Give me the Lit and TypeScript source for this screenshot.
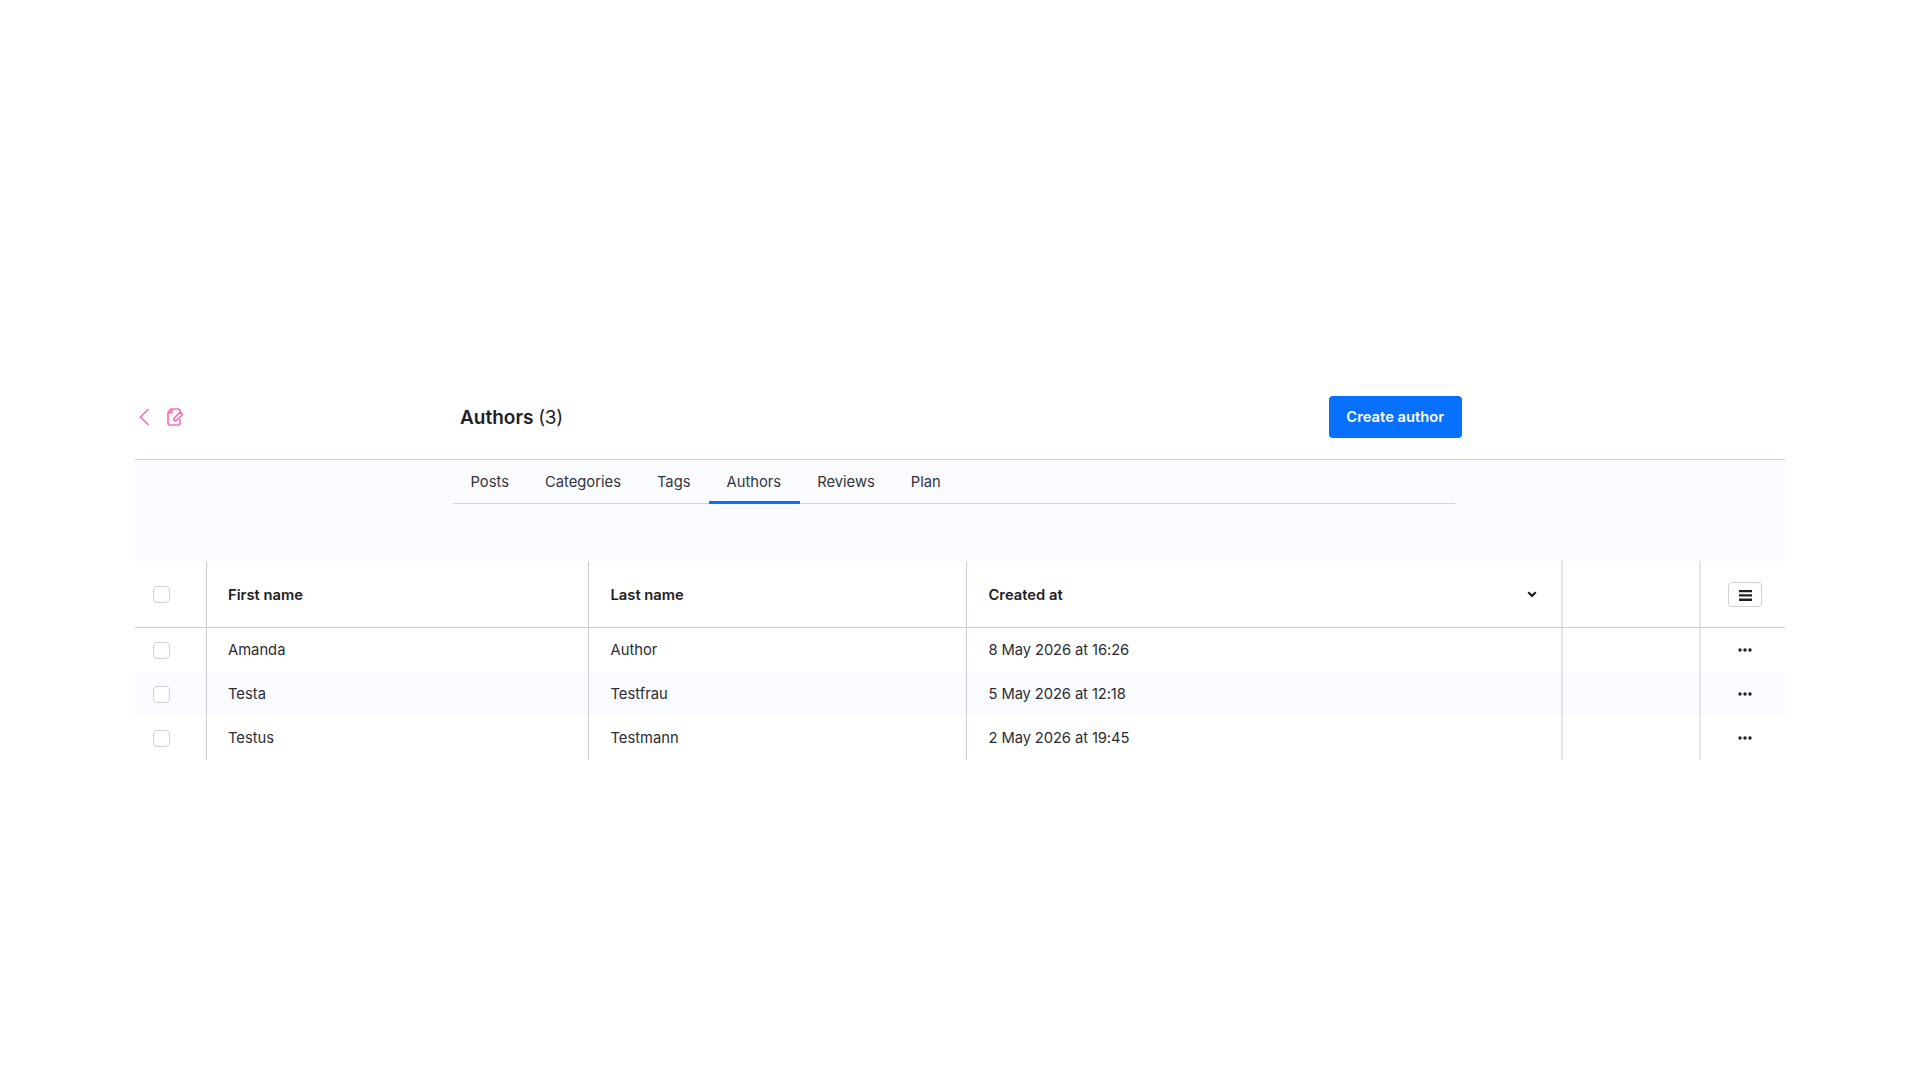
import { LitElement, html, css } from "lit";
import { customElement } from "lit/decorators.js";

interface Author {
  firstName: string;
  lastName: string;
  createdAt: string;
}

@customElement("app-root")
export class AppRoot extends LitElement {

  static styles = css`
    :host {
      display: block;
      box-sizing: border-box;
      width: 1920px;
      height: 1080px;
      padding: 375px 135px 0;
      background: #fff;
      color: #1f2026;
      font-family: Inter, "Liberation Sans", sans-serif;
      font-size: 14.75px;
      line-height: 20px;
    }

    svg {
      display: block;
    }

    button {
      padding: 0;
      border: 0;
      background: none;
      color: inherit;
      font: inherit;
    }

    .header {
      display: grid;
      grid-template-columns: 325px 868.5px 1fr;
      align-items: center;
      height: 84px;
      border-bottom: 1px solid #d1d2d8;
    }

    .nav {
      display: flex;
      align-items: center;
      gap: 16px;
      padding-left: 4px;
      color: #ff68b4;
    }

    .title {
      margin: 0;
      padding-top: 2px;
      font-size: 19px;
      font-weight: 600;
      line-height: 24px;
    }

    .count {
      font-weight: 400;
      letter-spacing: -0.3px;
    }

    .create {
      width: 133.5px;
      height: 42px;
      border-radius: 4px;
      background: #0870ff;
      color: #fff;
      font-weight: 600;
    }

    .tabs-area {
      height: 101px;
      padding: 0 330px 0 318px;
      background: #fafbff;
    }

    .tabs {
      display: flex;
      box-sizing: border-box;
      height: 44px;
      border-bottom: 1px solid #d4d5da;
    }

    .tab {
      height: 41px;
      padding: 0 18px;
      border-bottom: 3px solid transparent;
      line-height: 44px;
      color: #33343a;
    }

    .tab:first-child {
      padding-left: 17.5px;
    }

    .tab.active {
      margin: 0 -1px 0 1px;
      padding: 0 19px 0 17px;
      border-bottom-color: #0870ff;
    }

    .row {
      display: grid;
      grid-template-columns: 72px 382px 378px 596px 138px 84px;
      height: 44px;
      color: #2b2c33;
    }

    .row:nth-child(odd) {
      background: #fafbff;
    }

    .row.head {
      height: 66px;
      border-bottom: 1px solid #cbccd2;
      background: #fff;
      color: #1f2026;
      font-weight: 600;
    }

    .cell {
      display: flex;
      align-items: center;
      justify-content: space-between;
      padding: 0 24px 0 21px;
      border-right: 1px solid #cdced4;
    }

    .cell.last,
    .cell.date {
      padding-left: 21.5px;
    }

    .head .cell {
      padding-top: 1px;
    }

    .cell.select {
      padding: 0 0 0 17.5px;
    }

    .cell.wide {
      border-right: 2px solid #e4e5e8;
    }

    .row:not(.head) .date {
      letter-spacing: -0.1px;
    }

    .cell.actions {
      justify-content: center;
      padding: 0 0 0 4.5px;
      border-right: 0;
      color: #1f2026;
    }

    .checkbox {
      box-sizing: border-box;
      width: 17px;
      height: 17px;
      border: 1px solid #d1d2d9;
      border-radius: 4px;
      background: #fff;
    }

    .settings {
      display: flex;
      align-items: center;
      justify-content: center;
      box-sizing: border-box;
      width: 34px;
      height: 25px;
      padding-top: 2px;
      border: 1px solid #cfd0d8;
      border-radius: 4px;
    }
  `;

  private tabs = ["Posts", "Categories", "Tags", "Authors", "Reviews", "Plan"];

  private authors: Author[] = [
    { firstName: "Amanda", lastName: "Author", createdAt: "8 May 2026 at 16:26" },
    { firstName: "Testa", lastName: "Testfrau", createdAt: "5 May 2026 at 12:18" },
    { firstName: "Testus", lastName: "Testmann", createdAt: "2 May 2026 at 19:45" },
  ];

  render() {
    return html`
      <div class="header">
        <div class="nav">
          <svg width="12" height="18" viewBox="0 0 12 18" fill="none" stroke="currentColor" stroke-width="1.5">
            <path d="M9.6 1 1.4 9l8.2 8" />
          </svg>
          <svg width="17" height="18" viewBox="0 0 17 18" fill="none" stroke="currentColor" stroke-width="1.6" stroke-linejoin="round">
            <path d="M13 4V3a2 2 0 0 0-2-2H4.2L1 4.2V15a2 2 0 0 0 2 2h8a2 2 0 0 0 2-2v-4M4.8 1v3.8H1" />
            <path d="M7 12.5v-2.3l6-6 2.5 2.3-6.1 6z" />
          </svg>
        </div>
        <h1 class="title">Authors <span class="count">(${this.authors.length})</span></h1>
        <button class="create">Create author</button>
      </div>

      <div class="tabs-area">
        <div class="tabs">
          ${this.tabs.map(tab => html`
            <div class="tab ${tab === "Authors" ? "active" : ""}">${tab}</div>
          `)}
        </div>
      </div>

      <div class="table">
        <div class="row head">
          <div class="cell select"><div class="checkbox"></div></div>
          <div class="cell">First name</div>
          <div class="cell last">Last name</div>
          <div class="cell wide date">
            Created at
            <svg width="10" height="7" viewBox="0 0 10 7" fill="none" stroke="currentColor" stroke-width="2.2">
              <path d="m1.2 1.3 3.8 3.6 3.8-3.6" />
            </svg>
          </div>
          <div class="cell wide"></div>
          <div class="cell actions">
            <button class="settings">
              <svg width="13" height="11" viewBox="0 0 13 11" fill="currentColor">
                <path d="M0 0h13v2.3H0zM0 4.3h13v2.3H0zM0 8.6h13v2.3H0z" />
              </svg>
            </button>
          </div>
        </div>
        ${this.authors.map(author => this.renderRow(author))}
      </div>
    `;
  }

  private renderRow(author: Author) {
    return html`
      <div class="row">
        <div class="cell select"><div class="checkbox"></div></div>
        <div class="cell">${author.firstName}</div>
        <div class="cell last">${author.lastName}</div>
        <div class="cell wide date">${author.createdAt}</div>
        <div class="cell wide"></div>
        <div class="cell actions">
          <svg width="14" height="4" viewBox="0 0 14 4" fill="currentColor">
            <circle cx="2" cy="2" r="1.7" />
            <circle cx="7" cy="2" r="1.7" />
            <circle cx="12" cy="2" r="1.7" />
          </svg>
        </div>
      </div>
    `;
  }

}
